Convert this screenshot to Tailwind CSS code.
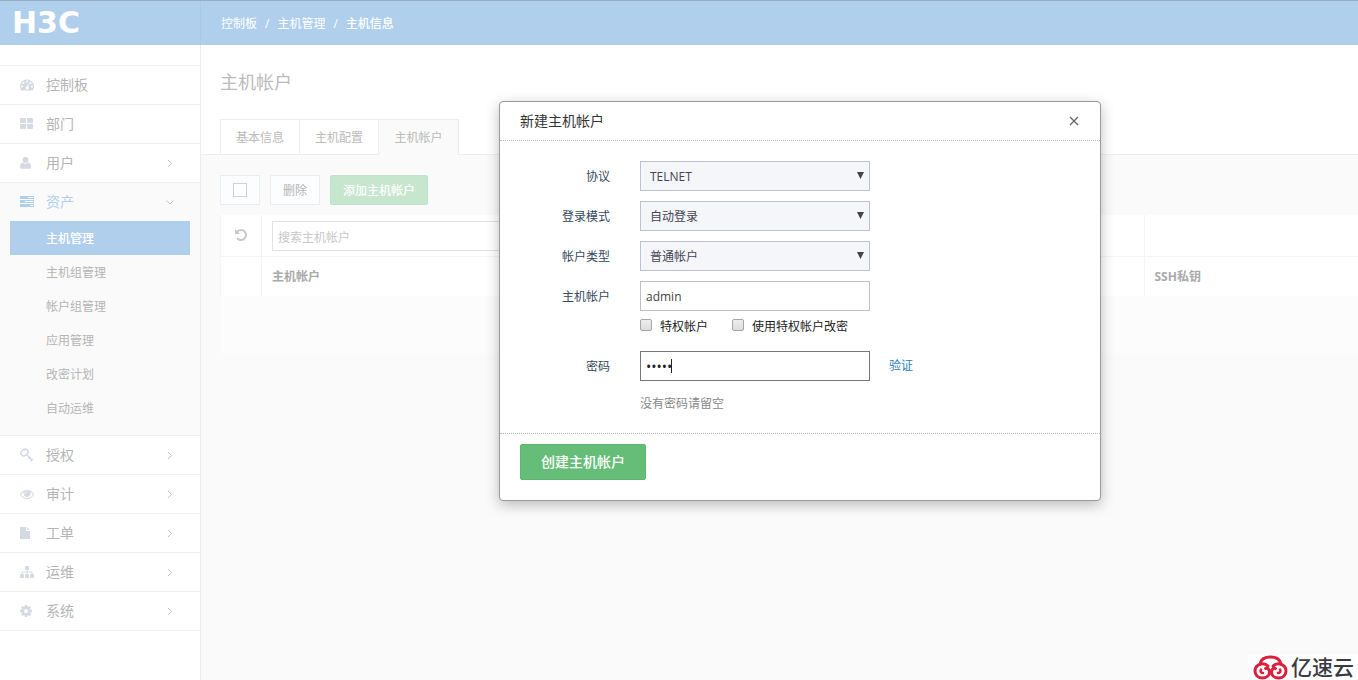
<!DOCTYPE html>
<html lang="zh-CN">
<head>
<meta charset="utf-8">
<title>主机帐户</title>
<script src="https://cdn.jsdelivr.net/npm/@tailwindcss/browser@4"></script>
</head>
<body class="relative flex min-h-screen flex-col overflow-hidden bg-white font-['Open_Sans','Noto_Sans_CJK_SC',sans-serif] text-xs text-[#b5b5b5]">
<svg class="hidden">
  <symbol id="right" viewBox="0 0 6 10"><path d="M1 2l3.500 3.500L1 9" fill="none" stroke="currentColor" stroke-width="1"/></symbol>
  <symbol id="arrow" viewBox="0 0 8 8"><path d="M0 0h8L4 8z" fill="currentColor"/></symbol>
</svg>

<header class="flex h-[45px] items-center border-t border-[#99adc4] bg-[#b0cfec] text-white">
  <div class="flex h-full w-[201px] items-center border-r border-[#a9c9e8] pl-3 font-['DejaVu_Sans'] text-[30px] leading-none font-bold">H3C</div>
  <nav class="flex gap-2 pt-0.5 pl-5" aria-label="breadcrumb">
    <a href="#">控制板</a><span>/</span><a href="#">主机管理</a><span>/</span><a href="#" class="font-medium">主机信息</a>
  </nav>
</header>

<div class="flex flex-1">
  <aside class="w-[201px] shrink-0 border-r border-[#ececec] pt-5 text-sm">
    <ul>
      <li class="border-t border-[#f0f0f0]"><a href="#" class="flex h-[38px] items-center pl-5">
        <svg class="mr-3 h-3.5 w-3.5 text-[#d5dae2]" viewBox="0 0 14 14"><path fill="currentColor" fill-rule="evenodd" d="M7 1.5a7 7 0 0 0-7 7c0 1.400.4 2.700 1.100 3.800.1.200.2.200.4.200h11c.2 0 .3 0 .4-.2A7 7 0 0 0 7 1.500zM2 7.500a1 1 0 1 1 0 2 1 1 0 0 1 0-2zM3.500 4a1 1 0 1 1 0 2 1 1 0 0 1 0-2zM7 2.500a1 1 0 1 1 0 2 1 1 0 0 1 0-2zM10.500 4a1 1 0 1 1 0 2 1 1 0 0 1 0-2zM12 7.500a1 1 0 1 1 0 2 1 1 0 0 1 0-2zM8 5.500l.8.2-.7 3a1.500 1.500 0 1 1-.9-.2z"/></svg>控制板</a></li>
      <li class="border-t border-[#f0f0f0]"><a href="#" class="flex h-[38px] items-center pl-5">
        <svg class="mr-3 h-3.5 w-3.5 text-[#d5dae2]" viewBox="0 0 14 14"><g fill="currentColor"><rect x="0" y="1" width="6" height="5" rx="1"/><rect x="7" y="1" width="6" height="5" rx="1"/><rect x="0" y="7" width="6" height="5" rx="1"/><rect x="7" y="7" width="6" height="5" rx="1"/></g></svg>部门</a></li>
      <li class="border-t border-[#f0f0f0]"><a href="#" class="flex h-[38px] items-center pl-5">
        <svg class="mr-3 h-3.5 w-3.5 text-[#d5dae2]" viewBox="0 0 14 14"><g fill="currentColor"><circle cx="5.500" cy="4" r="3"/><path d="M2.800 6.500C1 6.800 0 8.500 0 11c0 1 .6 1.800 1.700 1.800h7.600c1.100 0 1.700-.8 1.700-1.800 0-2.500-1-4.200-2.800-4.500a4 4 0 0 1-5.400 0z"/></g></svg>用户
        <svg class="mr-[27px] ml-auto h-2.5 w-1.5 text-[#c4c4c4]"><use href="#right"/></svg></a></li>
      <li class="border-t border-[#f0f0f0] bg-[#fafafa] pb-2.5">
        <a href="#" class="flex h-[38px] items-center pl-5 text-[#b0cfec]">
        <svg class="mr-3 h-3.5 w-3.5" viewBox="0 0 14 14"><path fill="currentColor" d="M0 1h14v3H0zM0 5h14v3H0zM0 9h14v3H0z"/><path stroke="#fff" d="M8 2.500h5M5 6.500h8M10 10.500h3"/></svg>资产
        <svg class="mr-[25px] ml-auto h-1.5 w-2.5 text-[#c4c4c4]" viewBox="0 0 10 6"><path d="M1.500 1.500L5 5l3.500-3.500" fill="none" stroke="currentColor"/></svg></a>
        <ul class="px-2.5 text-xs leading-8">
          <li><a href="#" class="block bg-[#b0cfec] pt-0.5 pl-9 font-medium text-white">主机管理</a></li>
          <li><a href="#" class="block pt-0.5 pl-9">主机组管理</a></li>
          <li><a href="#" class="block pt-0.5 pl-9">帐户组管理</a></li>
          <li><a href="#" class="block pt-0.5 pl-9">应用管理</a></li>
          <li><a href="#" class="block pt-0.5 pl-9">改密计划</a></li>
          <li><a href="#" class="block pt-0.5 pl-9">自动运维</a></li>
        </ul>
      </li>
      <li class="border-t border-[#f0f0f0]"><a href="#" class="flex h-[38px] items-center pl-5">
        <svg class="mr-3 h-3.5 w-3.5 text-[#d5dae2]" viewBox="0 0 14 14"><g fill="none" stroke="currentColor" stroke-width="1.500"><ellipse cx="4.500" cy="4.500" rx="3.800" ry="2.800" transform="rotate(-35 4.500 4.500)"/><path d="M6.500 6.500l6 5.700M8.500 11l2-2M10.700 13l2-2"/></g></svg>授权
        <svg class="mr-[27px] ml-auto h-2.5 w-1.5 text-[#c4c4c4]"><use href="#right"/></svg></a></li>
      <li class="border-t border-[#f0f0f0]"><a href="#" class="flex h-[38px] items-center pl-5">
        <svg class="mr-3 h-3.5 w-3.5 text-[#d5dae2]" viewBox="0 0 1792 1792"><path fill="currentColor" d="M1664 960q-152-236-381-353 61 104 61 225 0 185-131.500 316.500t-316.500 131.500-316.500-131.500-131.500-316.500q0-121 61-225-229 117-381 353 133 205 333.500 326.500t434.500 121.500 434.500-121.500 333.500-326.500zm-720-384q0-20-14-34t-34-14q-125 0-214.500 89.500t-89.500 214.500q0 20 14 34t34 14 34-14 14-34q0-86 61-147t147-61q20 0 34-14t14-34zm848 384q0 34-20 69-140 230-376.500 368.500t-499.500 138.500-499.500-139-376.500-368q-20-35-20-69t20-69q140-229 376.500-368t499.500-139 499.500 139 376.500 368q20 35 20 69z"/></svg>审计
        <svg class="mr-[27px] ml-auto h-2.5 w-1.5 text-[#c4c4c4]"><use href="#right"/></svg></a></li>
      <li class="border-t border-[#f0f0f0]"><a href="#" class="flex h-[38px] items-center pl-5">
        <svg class="mr-3 h-3.5 w-3.5 text-[#d5dae2]" viewBox="0 0 14 14"><path fill="currentColor" d="M0 1h6v4h4v8H0zM7 1l3 3H7z"/></svg>工单
        <svg class="mr-[27px] ml-auto h-2.5 w-1.5 text-[#c4c4c4]"><use href="#right"/></svg></a></li>
      <li class="border-t border-[#f0f0f0]"><a href="#" class="flex h-[38px] items-center pl-5">
        <svg class="mr-3 h-3.5 w-3.5 text-[#d5dae2]" viewBox="0 0 14 14"><g fill="currentColor"><rect x="5" y="1" width="4" height="4" rx="1"/><rect x="0" y="9" width="4" height="4" rx="1"/><rect x="5" y="9" width="4" height="4" rx="1"/><rect x="10" y="9" width="4" height="4" rx="1"/></g><path d="M7 4v5M2 9V7h10v2" fill="none" stroke="currentColor"/></svg>运维
        <svg class="mr-[27px] ml-auto h-2.5 w-1.5 text-[#c4c4c4]"><use href="#right"/></svg></a></li>
      <li class="border-y border-[#f0f0f0]"><a href="#" class="flex h-[38px] items-center pl-5">
        <svg class="mr-3 h-3.5 w-3.5 text-[#d5dae2]" viewBox="128 0 1792 1792"><path fill="currentColor" d="M1152 896q0-106-75-181t-181-75-181 75-75 181 75 181 181 75 181-75 75-181zm512-109v222q0 12-8 23t-20 13l-185 28q-19 54-39 91 35 50 107 138 10 12 10 25t-9 23q-27 37-99 108t-94 71q-12 0-26-9l-138-108q-44 23-91 38-16 136-29 186-7 28-36 28h-222q-14 0-24.500-8.500t-11.500-21.500l-28-184q-49-16-90-37l-141 107q-10 9-25 9-14 0-25-11-126-114-165-168-7-10-7-23 0-12 8-23 15-21 51-66.500t54-70.500q-27-50-41-99l-183-27q-13-2-21-12.500t-8-23.500v-222q0-12 8-23t19-13l186-28q14-46 39-92-40-57-107-138-10-12-10-24 0-10 9-23 26-36 98.500-107.500t94.500-71.500q13 0 26 10l138 107q44-23 91-38 16-136 29-186 7-28 36-28h222q14 0 24.500 8.500t11.500 21.500l28 184q49 16 90 37l142-107q9-9 24-9 13 0 25 10 129 119 165 170 7 8 7 22 0 12-8 23-15 21-51 66.500t-54 70.500q26 50 41 98l183 28q13 2 21 12.500t8 23.500z"/></svg>系统
        <svg class="mr-[27px] ml-auto h-2.5 w-1.5 text-[#c4c4c4]"><use href="#right"/></svg></a></li>
    </ul>
  </aside>

  <main class="flex min-w-0 flex-1 flex-col">
    <h1 class="pt-6 pb-6 pl-[19px] text-lg leading-[26px] text-[#bbbbbb]">主机帐户</h1>
    <div class="flex border-b border-[#eeeeee] pl-[19px] leading-8 text-[#bbbbbb]">
      <a href="#" class="w-[79px] border-t border-l border-[#eeeeee] pt-0.5 text-center">基本信息</a>
      <a href="#" class="w-[79px] border-t border-l border-[#eeeeee] pt-0.5 text-center">主机配置</a>
      <a href="#" class="-mb-px w-[81px] border-x border-t border-[#eeeeee] bg-[#fafafa] pt-0.5 text-center">主机帐户</a>
    </div>
    <div class="flex-1 bg-[#fafafa] pt-5 pl-[19px]">
      <div class="flex h-[30px] gap-2.5">
        <label class="flex w-10 items-center justify-center border border-[#ebedf0] bg-[#fcfdfe]"><input type="checkbox" aria-label="全选" class="h-3.5 w-3.5 appearance-none border border-[#cfd3d8] bg-white"></label>
        <button class="w-[50px] border border-[#ebedf0] bg-[#fcfdfe] pt-0.5">删除</button>
        <button class="w-[98px] rounded-xs border border-[#bfe3c8] bg-[#c6e6ce] pt-0.5 font-medium text-white">添加主机帐户</button>
      </div>
      <table class="mt-2.5 w-full table-fixed border-collapse text-left">
        <colgroup><col class="w-[41px]"><col><col class="w-[214px]"></colgroup>
        <tbody>
          <tr class="h-[41px] bg-white">
            <td class="border border-t-0 border-[#f4f4f4]"><button aria-label="重置" class="mx-auto block"><svg class="h-3.5 w-3.5 text-[#c8c8c8]" viewBox="0 0 1792 1792"><path fill="currentColor" d="M1664 896q0 156-61 298t-164 245-245 164-298 61q-172 0-327-72.500t-264-204.500q-7-10-6.500-22.500t8.500-20.500l137-138q10-9 25-9 16 2 23 12 73 95 179 147t225 52q104 0 198.500-40.500t163.500-109.500 109.500-163.500 40.500-198.500-40.500-198.500-109.500-163.500-163.500-109.500-198.500-40.500q-98 0-188 35.500t-160 101.500l137 138q31 30 14 69-17 40-59 40h-448q-26 0-45-19t-19-45v-448q0-42 40-59 39-17 69 14l130 129q107-101 244.500-156.500t284.500-55.500q156 0 298 61t245 164 164 245 61 298z"/></svg></button></td>
            <td class="border border-t-0 border-[#f4f4f4] px-2.5 pt-0.5"><input type="text" aria-label="搜索主机帐户" placeholder="搜索主机帐户" class="block h-[30px] w-[400px] border border-[#e2e2e2] bg-white px-[5px] pt-0.5 placeholder:text-[#c8c8c8]"></td>
            <td class="border-b border-[#f4f4f4]"></td>
          </tr>
          <tr class="h-10 bg-white text-[#aaaaaa]">
            <th class="border-x border-[#f4f4f4]"></th>
            <th class="border-x border-[#f4f4f4] px-2.5 pt-0.5 font-bold">主机帐户</th>
            <th class="px-2.5 pt-0.5 font-bold">SSH私钥</th>
          </tr>
          <tr class="h-[57px] bg-[#fcfcfc]"><td colspan="3"></td></tr>
        </tbody>
      </table>
    </div>
  </main>
</div>

<div role="dialog" aria-labelledby="dialog-title" class="absolute top-[101px] left-[499px] w-[602px] rounded-sm border border-[#999999] bg-white text-[#34495e] shadow-[0_4px_14px_rgba(0,0,0,0.25)]">
  <div class="flex h-[39px] items-center justify-between border-b border-dotted border-[#bbbbbb] pr-5 pl-5">
    <h2 id="dialog-title" class="text-sm text-[#333333]">新建主机帐户</h2>
    <button aria-label="关闭" class="p-px text-[#666666]"><svg class="h-2.5 w-2.5" viewBox="0 0 10 10"><path d="M1 1l8 8M9 1l-8 8" stroke="currentColor" stroke-width="1.300"/></svg></button>
  </div>
  <form class="grid grid-cols-[110px_230px_1fr] items-center gap-x-[30px] gap-y-2.5 pt-5 pb-5">
    <label for="protocol" class="pt-0.5 text-right">协议</label>
    <div class="relative"><select id="protocol" class="block h-[30px] w-full appearance-none border border-[#bcc2cf] bg-[#f5f6fa] px-[9px] pt-0.5 text-[#444455]"><option>TELNET</option></select><svg class="pointer-events-none absolute top-[11px] right-1.5 h-[7px] w-[7px] text-[#444444]"><use href="#arrow"/></svg></div><span></span>
    <label for="mode" class="pt-0.5 text-right">登录模式</label>
    <div class="relative"><select id="mode" class="block h-[30px] w-full appearance-none border border-[#bcc2cf] bg-[#f5f6fa] px-[9px] pt-0.5 text-[#444455]"><option>自动登录</option></select><svg class="pointer-events-none absolute top-[11px] right-1.5 h-[7px] w-[7px] text-[#444444]"><use href="#arrow"/></svg></div><span></span>
    <label for="type" class="pt-0.5 text-right">帐户类型</label>
    <div class="relative"><select id="type" class="block h-[30px] w-full appearance-none border border-[#bcc2cf] bg-[#f5f6fa] px-[9px] pt-0.5 text-[#444455]"><option>普通帐户</option></select><svg class="pointer-events-none absolute top-[11px] right-1.5 h-[7px] w-[7px] text-[#444444]"><use href="#arrow"/></svg></div><span></span>
    <label for="account" class="pt-0.5 text-right">主机帐户</label>
    <input id="account" type="text" value="admin" class="h-[30px] border border-[#c0c0c0] px-[5px] text-[#444444]"><span></span>
    <div class="col-span-2 col-start-2 -mt-1.5 mb-1 flex h-[22px] items-center gap-6 text-[#222222]">
      <label class="flex items-start gap-2"><input type="checkbox" class="mt-px h-3 w-3 appearance-none rounded-xs border border-[#a5a5a5] bg-linear-to-b from-[#eeeeee] to-[#dcdcdc]"><span class="pt-px">特权帐户</span></label>
      <label class="flex items-start gap-2"><input type="checkbox" class="mt-px h-3 w-3 appearance-none rounded-xs border border-[#a5a5a5] bg-linear-to-b from-[#eeeeee] to-[#dcdcdc]"><span class="pt-px">使用特权帐户改密</span></label>
    </div>
    <label for="password" class="pt-0.5 text-right">密码</label>
    <div class="relative"><input id="password" type="password" value="admin" class="block h-[30px] w-full border border-[#777777] px-[5px] text-sm text-[#222222] caret-transparent outline-none"><span class="absolute top-2 left-[31px] h-3.5 w-px bg-[#222222]"></span></div>
    <a href="#" class="-ml-[11px] text-[#2a80b9]">验证</a>
    <p class="col-span-2 col-start-2 mt-1 leading-[18px] text-[#888888]">没有密码请留空</p>
  </form>
  <div class="border-t border-dotted border-[#bbbbbb] px-5 pt-2.5 pb-5">
    <button class="h-9 w-[126px] rounded-xs border border-[#5cb571] bg-[#65bd77] text-sm font-medium text-white">创建主机帐户</button>
  </div>
</div>

<div class="absolute right-0 bottom-0 flex h-[26px] items-center gap-0.5 overflow-hidden bg-white pr-1 pl-[5px] text-[21px] leading-none font-medium text-[#3a3a42]">
  <svg class="h-[26px] w-[36px]" viewBox="0 0 36 26"><g fill="none" stroke="#dc1f3c" stroke-width="3" stroke-linecap="round"><path d="M7 10C8 5 12 3 17.500 3S27 5 28 10"/><path d="M15 12c-2-2-5-2.500-7-2-4 1-6 4-6 7 0 4 3 7 7 7 5 0 7.500-3 7.500-6s-2-4-4-3.500"/><path d="M20 12c2-2 5-2.500 7-2 4 1 6 4 6 7 0 4-3 7-7 7-5 0-7.500-3-7.500-6s2-4 4-3.500"/><path stroke-width="2.500" d="M8 15.500c-1 2 0 3.500 2 3.500M27 15.500c1 2 0 3.500-2 3.500"/></g></svg>
  <span>亿速云</span>
</div>
</body>
</html>
